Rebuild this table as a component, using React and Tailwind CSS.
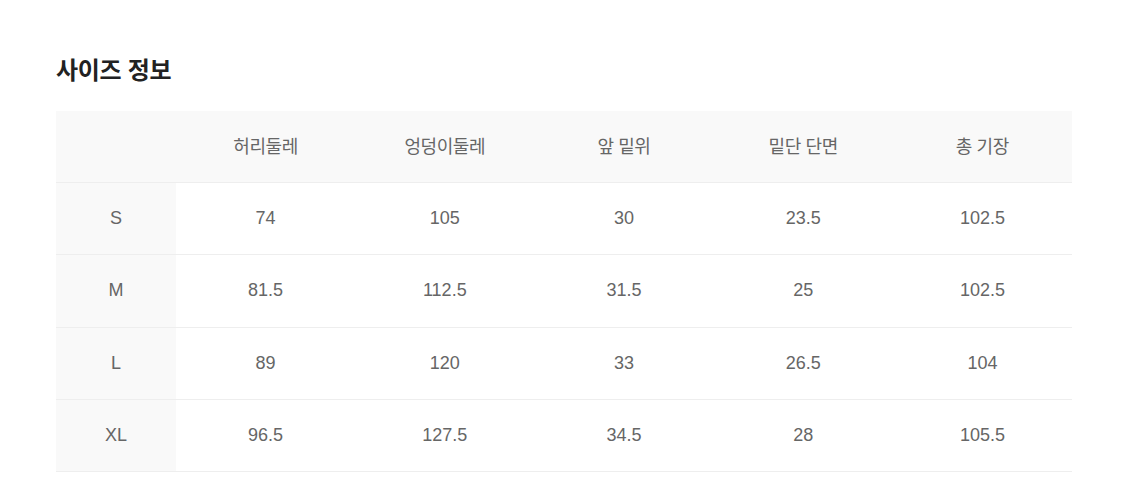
export default function App() {
  const headers = ["허리둘레", "엉덩이둘레", "앞 밑위", "밑단 단면", "총 기장"];
  const rows = [
    ["S", "74", "105", "30", "23.5", "102.5"],
    ["M", "81.5", "112.5", "31.5", "25", "102.5"],
    ["L", "89", "120", "33", "26.5", "104"],
    ["XL", "96.5", "127.5", "34.5", "28", "105.5"],
  ];
  return (
    <div
      className="w-[1125px] h-[495px] bg-white pt-[54px] pl-[56px]"
      style={{ fontFamily: '"Liberation Sans", "Noto Sans CJK KR", sans-serif' }}
    >
      <h2 className="text-[24px] font-bold text-[#222] leading-[34px] tracking-[-0.3px]">사이즈 정보</h2>
      <div className="mt-[23px] w-[1016px]">
        <div className="flex h-[72px] pt-[2px] bg-[#f9f9f9] border-b border-[#eeeeee] items-center">
          <div className="w-[120px]" />
          {headers.map((h) => (
            <div key={h} className="flex-1 text-center text-[18px] text-[#666] tracking-[-0.4px]">
              {h}
            </div>
          ))}
        </div>
        {rows.map((r) => (
          <div key={r[0]} className="flex h-[72.25px] border-b border-[#eeeeee] items-stretch">
            <div className="w-[120px] bg-[#f9f9f9] flex items-center justify-center text-[18px] text-[#666]">
              {r[0]}
            </div>
            {r.slice(1).map((v, i) => (
              <div key={i} className="flex-1 flex items-center justify-center text-[18px] text-[#666]">
                {v}
              </div>
            ))}
          </div>
        ))}
      </div>
    </div>
  );
}
